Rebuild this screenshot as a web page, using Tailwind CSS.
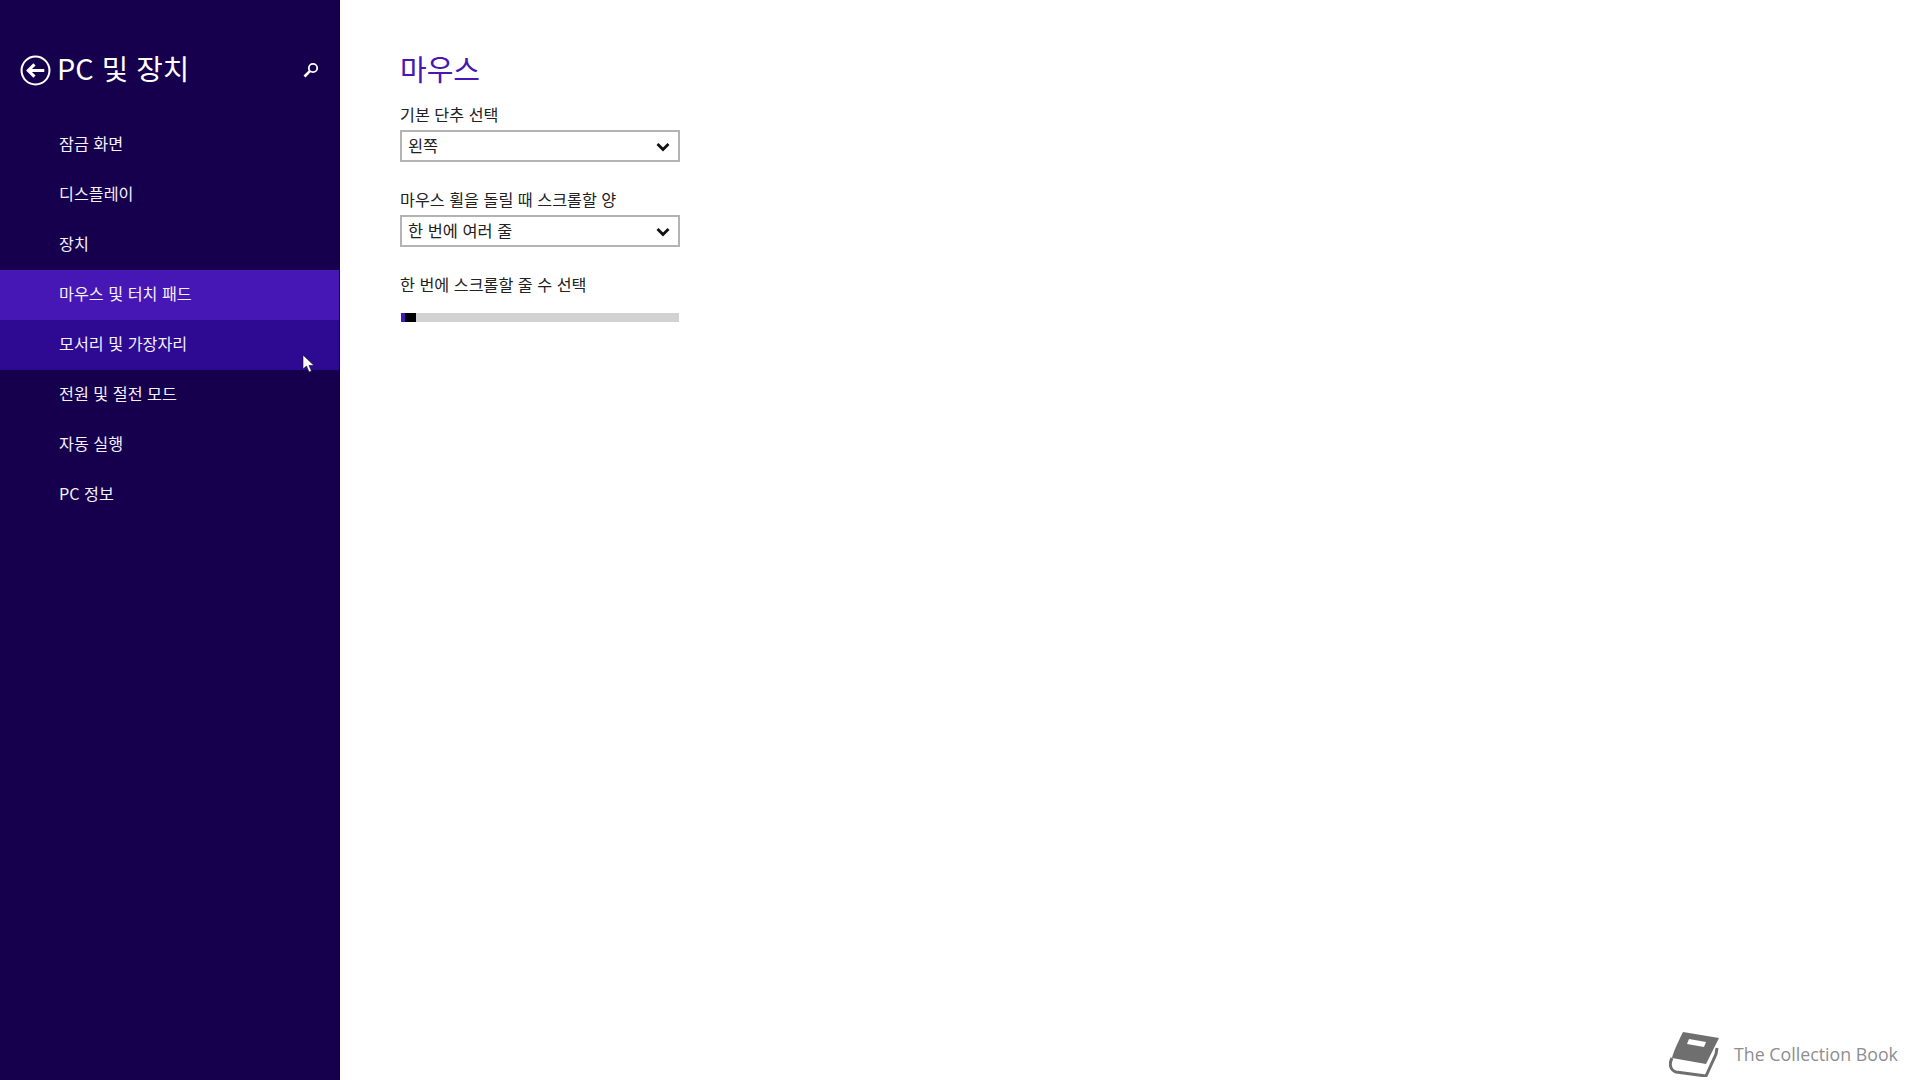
<!DOCTYPE html>
<html lang="ko">
<head>
<meta charset="utf-8">
<script src="https://cdn.jsdelivr.net/npm/@tailwindcss/browser@4"></script>
</head>
<body class="font-['Noto_Sans_CJK_KR','Noto_Sans',sans-serif]">
<div class="relative flex h-[1080px] w-[1920px] overflow-hidden bg-white">
  <aside class="w-[340px] shrink-0 bg-[#16004e] text-white">
    <div class="flex h-[120px] items-center pl-[20px] pr-[21px] pt-[20px]">
      <svg class="mr-[6px] h-[31px] w-[31px] shrink-0" viewBox="0 0 30 30" fill="none" stroke="white">
        <circle cx="15" cy="15" r="13.5" stroke-width="2"/>
        <path d="M23.5 15H8M14 9l-6 6 6 6" stroke-width="3"/>
      </svg>
      <h1 class="flex-1 pb-[3px] text-[28.800px] leading-none font-normal whitespace-nowrap">PC 및 장치</h1>
      <svg class="h-[16px] w-[16px] shrink-0" viewBox="0 0 16 16" fill="none" stroke="white">
        <circle cx="10" cy="6" r="4.2" stroke-width="1.8"/>
        <path d="M6.8 9.2 1.5 14.5" stroke-width="2.6"/>
      </svg>
    </div>
    <nav class="text-[16.200px] text-[#f4f0ff]">
      <div class="flex h-[50px] items-center pb-[3px] pl-[59px]">잠금 화면</div>
      <div class="flex h-[50px] items-center pb-[3px] pl-[59px]">디스플레이</div>
      <div class="flex h-[50px] items-center pb-[4px] pl-[59px]">장치</div>
      <div class="flex h-[50px] w-[339px] items-center bg-[#4617b4] pb-[3px] pl-[59px]">마우스 및 터치 패드</div>
      <div class="flex h-[50px] w-[339px] items-center bg-[#2e0a92] pb-[4px] pl-[59px]">모서리 및 가장자리</div>
      <div class="flex h-[50px] items-center pb-[3px] pl-[59px]">전원 및 절전 모드</div>
      <div class="flex h-[50px] items-center pb-[3px] pl-[59px]">자동 실행</div>
      <div class="flex h-[50px] items-center pb-[3px] pl-[59px]">PC 정보</div>
    </nav>
  </aside>
  <main class="w-[280px] ml-[60px] pt-[50px] text-[16.200px] text-[#222]">
    <h2 class="h-[38px] text-[29px] leading-[36px] font-normal text-[#4617b4]">마우스</h2>
    <div class="mt-[15px] h-[27px] leading-[22px]">기본 단추 선택</div>
    <div class="flex h-[32px] items-center justify-between border-2 border-[#b4b4b4] pb-[1px] pl-[6px] pr-[8px] text-[16.400px]">
      <span>왼쪽</span>
      <svg class="mt-[2px] h-[10px] w-[14px]" viewBox="0 0 14 10" fill="none" stroke="#111" stroke-width="2.8"><path d="M1.500 2 7 7.500 12.500 2"/></svg>
    </div>
    <div class="mt-[26px] h-[27px] leading-[22px]">마우스 휠을 돌릴 때 스크롤할 양</div>
    <div class="flex h-[32px] items-center justify-between border-2 border-[#b4b4b4] pb-[1px] pl-[6px] pr-[8px] text-[16.400px]">
      <span>한 번에 여러 줄</span>
      <svg class="mt-[2px] h-[10px] w-[14px]" viewBox="0 0 14 10" fill="none" stroke="#111" stroke-width="2.8"><path d="M1.500 2 7 7.500 12.500 2"/></svg>
    </div>
    <div class="mt-[26px] h-[27px] leading-[22px]">한 번에 스크롤할 줄 수 선택</div>
    <div class="ml-[1px] mt-[13px] flex h-[9px] w-[278px] bg-[#d2d2d2]">
      <div class="w-[4px] bg-[#4617b4]"></div>
      <div class="w-[11px] bg-black"></div>
    </div>
  </main>
  <svg class="absolute left-[302px] top-[354px] h-[20px] w-[13px]" viewBox="0 0 13 20">
    <path d="M1 1v14l3.500-3 2.500 6 2.500-1-2.500-5.500H12z" fill="white" stroke="#111" stroke-width=".6"/>
  </svg>
  <div class="absolute left-[1669px] top-[1031px] flex items-center">
    <svg class="h-[46px] w-[52px]" viewBox="0 0 52 46" fill="none">
      <path d="M14 1 50 7 37 33 3 27C4 22 8 13 14 1Z" fill="#6f6f6f"/>
      <path d="M20 8 37 11 35 16 18 13Z" fill="#fff"/>
      <path d="M3 27c-3 6-2 12 4 14l30 4 10-22 1-6" stroke="#6f6f6f" stroke-width="3"/>
      <path d="M6 34 37 39" stroke="#fff" stroke-width="1"/>
    </svg>
    <span class="ml-[13px] pt-[2px] font-['Open_Sans',sans-serif] text-[17.800px] leading-none whitespace-nowrap text-[#8e8e8e]">The Collection Book</span>
  </div>
</div>
</body>
</html>
